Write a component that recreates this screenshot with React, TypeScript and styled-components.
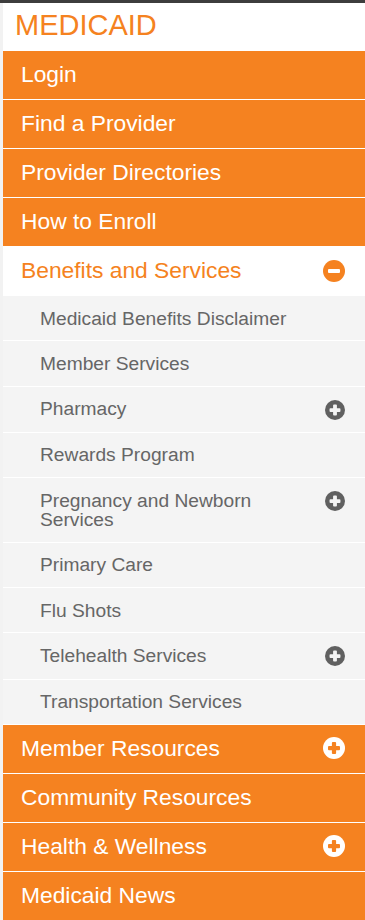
import React from "react";
import styled, { createGlobalStyle } from "styled-components";

const ORANGE = "#f58220";
const GRAY_TEXT = "#666666";
const SUB_BG = "#f4f4f4";

const Global = createGlobalStyle`
  html, body { margin: 0; padding: 0; }
  body {
    background: #f2f2f2;
    font-family: "Liberation Sans", Arial, sans-serif;
    overflow: hidden;
  }
  * { box-sizing: border-box; }
`;

const Page = styled.div`
  border-top: 3px solid #3d3d3d;
  min-height: 920px;
  padding-left: 3px;
`;

const Nav = styled.nav`
  background: #fff;
  width: 100%;
`;

const Header = styled.div`
  height: 48px;
  padding: 0 12px 4px;
  display: flex;
  align-items: center;
  color: ${ORANGE};
  font-size: 29px;
  line-height: 1;
`;

const List = styled.ul`
  list-style: none;
  margin: 0;
  padding: 0;
`;

const TopItem = styled.li<{ $active?: boolean }>`
  display: flex;
  align-items: center;
  justify-content: space-between;
  height: 49px;
  padding: 0 20px 1px 18px;
  border-bottom: 1px solid #fff;
  background: ${(p) => (p.$active ? "#fff" : ORANGE)};
  color: ${(p) => (p.$active ? ORANGE : "#fff")};
  font-size: 22.8px;
  line-height: 1;
`;

const SubList = styled.ul`
  list-style: none;
  margin: 0;
  padding: 0;
  background: ${SUB_BG};
`;

const SubItem = styled.li`
  display: flex;
  align-items: flex-start;
  justify-content: space-between;
  padding: 12.55px 20px 12.55px 37px;
  border-bottom: 1px solid #fff;
  color: ${GRAY_TEXT};
  font-size: 19.2px;
  line-height: 19.2px;
`;

const SubLabel = styled.span`
  max-width: 256px;
`;

const IconSlot = styled.span`
  flex: none;
  display: flex;
  align-items: center;
  justify-content: center;
  height: 19.2px;
  margin-top: 1px;
`;

const PlusCircle = ({ size, bg, fg }: { size: number; bg: string; fg: string }) => (
  <svg width={size} height={size} viewBox="0 0 22 22" style={{ display: "block" }}>
    <circle cx="11" cy="11" r="11" fill={bg} />
    <rect x="5" y="9" width="12" height="4.2" rx="1" fill={fg} />
    <rect x="8.9" y="5" width="4.2" height="12" rx="1" fill={fg} />
  </svg>
);

const MinusCircle = ({ size, bg, fg }: { size: number; bg: string; fg: string }) => (
  <svg width={size} height={size} viewBox="0 0 22 22" style={{ display: "block" }}>
    <circle cx="11" cy="11" r="11" fill={bg} />
    <rect x="5" y="8.9" width="12" height="4.2" rx="1" fill={fg} />
  </svg>
);

const topBefore = ["Login", "Find a Provider", "Provider Directories", "How to Enroll"];

const subItems: { label: string; more?: boolean }[] = [
  { label: "Medicaid Benefits Disclaimer" },
  { label: "Member Services" },
  { label: "Pharmacy", more: true },
  { label: "Rewards Program" },
  { label: "Pregnancy and Newborn Services", more: true },
  { label: "Primary Care" },
  { label: "Flu Shots" },
  { label: "Telehealth Services", more: true },
  { label: "Transportation Services" },
];

const topAfter: { label: string; more?: boolean }[] = [
  { label: "Member Resources", more: true },
  { label: "Community Resources" },
  { label: "Health & Wellness", more: true },
  { label: "Medicaid News" },
];

export default function App() {
  return (
    <>
      <Global />
      <Page>
        <Nav>
          <Header>MEDICAID</Header>
          <List>
            {topBefore.map((t) => (
              <TopItem key={t}>{t}</TopItem>
            ))}
            <TopItem $active>
              <span>Benefits and Services</span>
              <MinusCircle size={22} bg={ORANGE} fg="#fff" />
            </TopItem>
            <li>
              <SubList>
                {subItems.map((s) => (
                  <SubItem key={s.label}>
                    <SubLabel>{s.label}</SubLabel>
                    {s.more && (
                      <IconSlot>
                        <PlusCircle size={20} bg="#606060" fg={SUB_BG} />
                      </IconSlot>
                    )}
                  </SubItem>
                ))}
              </SubList>
            </li>
            {topAfter.map((t) => (
              <TopItem key={t.label}>
                <span>{t.label}</span>
                {t.more && <PlusCircle size={22} bg="#fff" fg={ORANGE} />}
              </TopItem>
            ))}
          </List>
        </Nav>
      </Page>
    </>
  );
}
